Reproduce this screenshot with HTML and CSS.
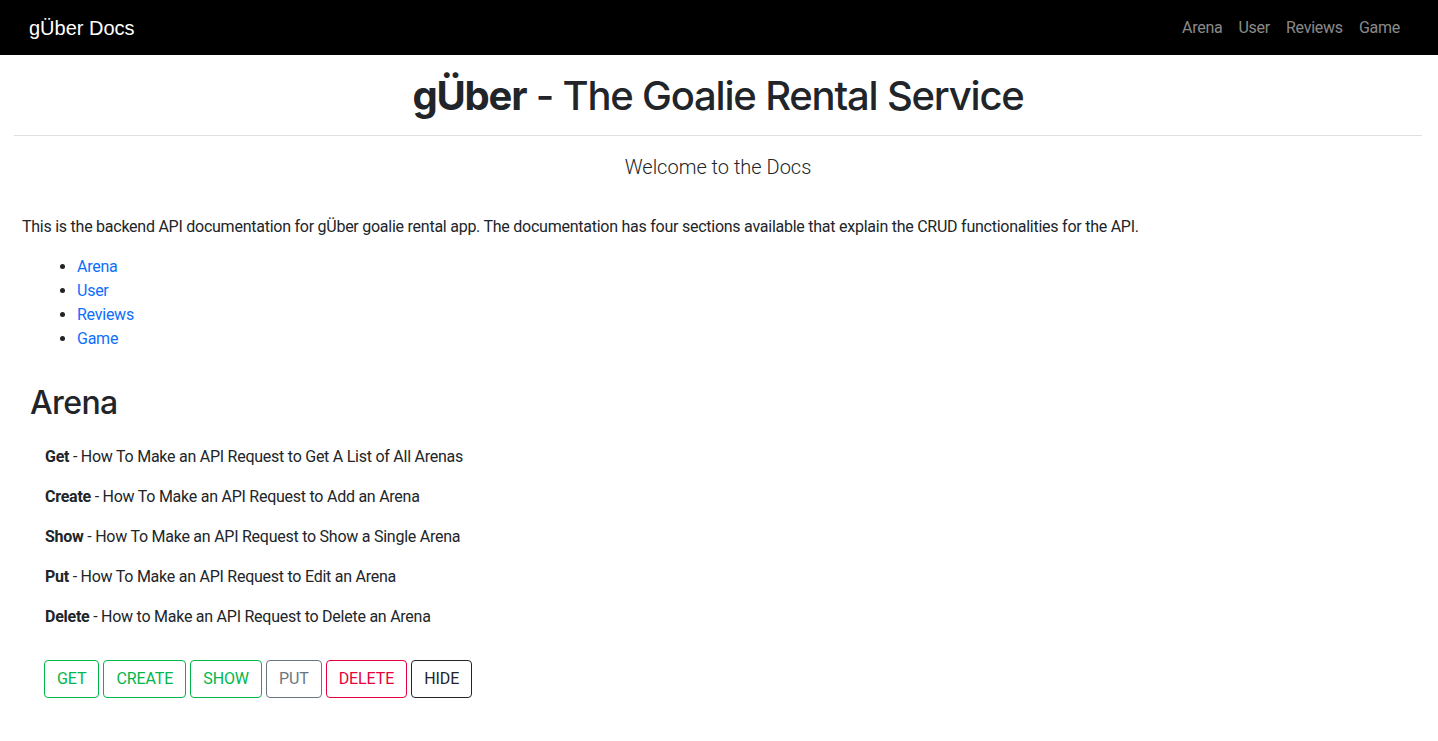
FILE: index.html
```html
<!DOCTYPE html>
<html lang="en">
<head>
<meta charset="utf-8">
<title>gÜber Docs</title>
<link rel="stylesheet" href="styles.css">
</head>
<body>
<nav class="navbar">
  <a class="brand" href="#">gÜber Docs</a>
  <ul class="nav-links">
    <li><a href="#arena">Arena</a></li>
    <li><a href="#user">User</a></li>
    <li><a href="#reviews">Reviews</a></li>
    <li><a href="#game">Game</a></li>
  </ul>
</nav>
<main class="page">
  <h1 class="title"><b>gÜber</b> - The Goalie Rental Service</h1>
  <hr class="rule">
  <p class="lead">Welcome to the Docs</p>
  <p class="intro">This is the backend API documentation for gÜber goalie rental app. The documentation has four sections available that explain the CRUD functionalities for the API.</p>
  <ul class="toc">
    <li><a href="#arena">Arena</a></li>
    <li><a href="#user">User</a></li>
    <li><a href="#reviews">Reviews</a></li>
    <li><a href="#game">Game</a></li>
  </ul>
  <section class="section" id="arena">
    <h2 class="section-title">Arena</h2>
    <div class="endpoints">
      <p><b>Get</b> - How To Make an API Request to Get A List of All Arenas</p>
      <p><b>Create</b> - How To Make an API Request to Add an Arena</p>
      <p><b>Show</b> - How To Make an API Request to Show a Single Arena</p>
      <p><b>Put</b> - How To Make an API Request to Edit an Arena</p>
      <p><b>Delete</b> - How to Make an API Request to Delete an Arena</p>
    </div>
    <div class="buttons">
      <button class="btn btn-success">Get</button>
      <button class="btn btn-success">Create</button>
      <button class="btn btn-success">Show</button>
      <button class="btn btn-secondary">Put</button>
      <button class="btn btn-danger">Delete</button>
      <button class="btn btn-dark">Hide</button>
    </div>
  </section>
</main>
</body>
</html>
```
FILE: styles.css
```css
* { box-sizing: border-box; }
html, body { margin: 0; padding: 0; }
body {
  font-family: Roboto, "Noto Sans", "Liberation Sans", sans-serif;
  font-size: 16px;
  line-height: 24px;
  letter-spacing: -0.25px;
  color: #212529;
  background: #fff;
}
a { text-decoration: none; }

.navbar {
  height: 55px;
  background: #000;
  display: flex;
  align-items: center;
  justify-content: space-between;
  padding: 0 30px 0 29px;
}
.brand {
  font-family: "Liberation Sans", Arial, sans-serif;
  font-size: 20px;
  letter-spacing: 0;
  color: #fff;
}
.nav-links {
  list-style: none;
  margin: 0;
  padding: 0;
  display: flex;
}
.nav-links a {
  display: block;
  padding: 8px 8px;
  font-family: Roboto, "Liberation Sans", Arial, sans-serif;
  font-size: 16px;
  color: rgba(255,255,255,0.55);
}

.page { padding: 0 16px 0 14px; }
.title {
  margin: 17px 0 15px;
  font-family: Inter, Roboto, sans-serif;
  font-size: 40px;
  line-height: 48px;
  font-weight: 500;
  letter-spacing: -1.2px;
  text-align: center;
}
.title b { font-weight: 700; }
.rule {
  margin: 0;
  border: 0;
  border-top: 1px solid #e0e0e0;
}
.lead {
  margin: 16px 0 33px;
  font-size: 20px;
  line-height: 30px;
  font-weight: 300;
  letter-spacing: 0;
  text-align: center;
}
.intro { margin: 0 0 16px 8px; }
.toc {
  margin: 0 0 16px;
  padding-left: 63px;
}
.toc a { color: #0d6efd; }

.section { padding: 0 16px; }
.section-title {
  margin: 33px 0 23px;
  font-family: Inter, Roboto, sans-serif;
  font-size: 32px;
  line-height: 38px;
  font-weight: 500;
  letter-spacing: -0.6px;
}
.endpoints { padding-left: 15px; }
.endpoints p { margin: 0 0 16px; }
.endpoints b { font-weight: 700; }
.buttons {
  margin-top: 31px;
  padding-left: 14px;
  display: flex;
  gap: 4px;
}
.btn {
  font-family: Roboto, "Noto Sans", "Liberation Sans", sans-serif;
  font-size: 16px;
  line-height: 24px;
  letter-spacing: -0.1px;
  padding: 6px 12px;
  border: 1px solid;
  border-radius: 4px;
  background: transparent;
  text-transform: uppercase;
  cursor: pointer;
}
.btn-success { color: #00b74a; border-color: #00b74a; }
.btn-secondary { color: #6c757d; border-color: #6c757d; }
.btn-danger { color: #e8003d; border-color: #e8003d; }
.btn-dark { color: #212529; border-color: #212529; }
```
